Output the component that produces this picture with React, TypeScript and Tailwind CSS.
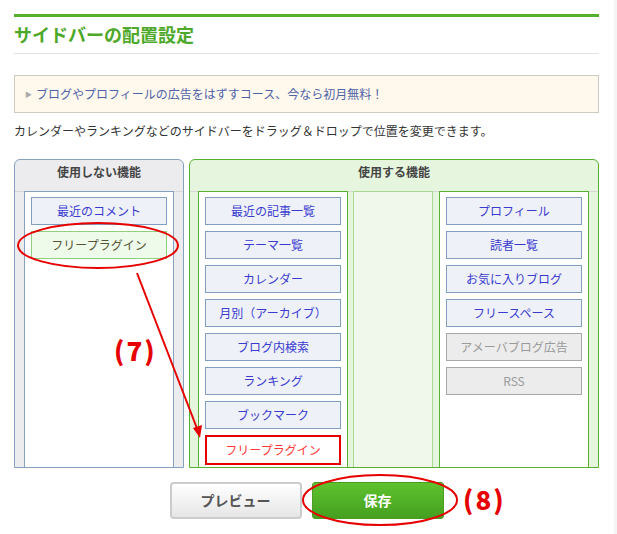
import React from 'react';

type Variant = 'blue' | 'green' | 'red' | 'gray';

const itemStyles: Record<Variant, string> = {
  blue: 'h-[28px] border border-[#819dbf] bg-[#eef2f8] text-[#3a3ad0]',
  green: 'h-[28px] border border-[#92cf7c] bg-[#eefaea] text-[#555533]',
  red: 'h-[30px] border-2 border-[#e60000] bg-white text-[#ff3a3a]',
  gray: 'h-[28px] border border-[#a8a8a8] bg-[#ececec] text-[#9a9a9a]',
};

const Item = ({ label, variant = 'blue' }: { label: string; variant?: Variant }) => (
  <div className={`flex items-center justify-center text-[12px] leading-none ${itemStyles[variant]}`}>
    {label}
  </div>
);

const usedLeft = ['最近の記事一覧', 'テーマ一覧', 'カレンダー', '月別（アーカイブ）', 'ブログ内検索', 'ランキング', 'ブックマーク'];
const usedRight = ['プロフィール', '読者一覧', 'お気に入りブログ', 'フリースペース'];

export default function App() {
  return (
    <div className="relative flex min-h-[534px] w-[617px] bg-white font-['Noto_Sans_CJK_JP',sans-serif] text-[#333]">
      <div className="w-[614px] pl-[14px] pr-[15px] pt-[14px]">
        {/* 見出し */}
        <div className="h-[3px] bg-[#55b030]" />
        <h2 className="mt-[5px] border-b border-[#e2e2e2] pb-[7px] text-[18px] font-bold leading-[24px] text-[#4ea829]">
          サイドバーの配置設定
        </h2>

        <div className="mt-[21px] flex h-[38px] items-center gap-[4px] border border-[#cfcac2] bg-[#fff8ec] pl-[10px] text-[12px] text-[#4f63a8]">
          <span className="text-[7px] text-[#aaa]">▶</span>
          <span>ブログやプロフィールの広告をはずすコース、今なら初月無料！</span>
        </div>

        <p className="mt-[9px] text-[12px] leading-[18px] text-[#333]">
          カレンダーやランキングなどのサイドバーをドラッグ＆ドロップで位置を変更できます。
        </p>

        {/* パネル */}
        <div className="mt-[19px] flex h-[309px] gap-[5px]">
          <div className="flex w-[170px] flex-col rounded-t-[6px] border border-[#86a0bf] bg-[#ececee]">
            <div className="h-[32px] shrink-0 border-b border-[#d6d6d6] pt-[3px] text-center text-[12px] font-bold leading-[18px] text-[#444]">
              使用しない機能
            </div>
            <div className="flex flex-1 px-[9px]">
              <div className="-mt-px flex w-[150px] flex-col gap-[6px] border-x border-t border-[#86a0bf] bg-white px-[6px] pt-[5px]">
                <Item label="最近のコメント" />
                <Item label="フリープラグイン" variant="green" />
              </div>
            </div>
          </div>

          <div className="flex w-[410px] flex-col rounded-t-[6px] border border-[#58b030] bg-[#e6f5de]">
            <div className="h-[32px] shrink-0 border-b border-[#d6d6d6] pt-[3px] text-center text-[12px] font-bold leading-[18px] text-[#444]">
              使用する機能
            </div>
            <div className="flex flex-1 pl-[8px]">
              <div className="-mt-px flex w-[150px] flex-col gap-[6px] border-x border-t border-[#58b030] bg-white px-[6px] pt-[5px]">
                {usedLeft.map((l) => (
                  <Item key={l} label={l} />
                ))}
                <Item label="フリープラグイン" variant="red" />
              </div>
              <div className="-mt-px ml-[5px] w-[80px] border-x border-t border-[#a9d892] bg-[#f0f8eb]" />
              <div className="-mt-px ml-[6px] flex w-[150px] flex-col gap-[6px] border-x border-t border-[#58b030] bg-white px-[6px] pt-[5px]">
                {usedRight.map((l) => (
                  <Item key={l} label={l} />
                ))}
                <Item label="アメーバブログ広告" variant="gray" />
                <Item label="RSS" variant="gray" />
              </div>
            </div>
          </div>
        </div>

        {/* ボタン */}
        <div className="mt-[14px] flex justify-center gap-[10px]">
          <button className="h-[37px] w-[132px] rounded-[4px] border-2 border-[#cccccc] bg-gradient-to-b from-white to-[#e6e6e6] text-[14px] font-bold text-[#555]">
            プレビュー
          </button>
          <button className="h-[37px] w-[132px] rounded-[3px] border border-[#4b9d24] bg-gradient-to-b from-[#5ec22e] to-[#45a020] text-[14px] font-bold text-white">
            保存
          </button>
        </div>
      </div>
      <div className="flex-1 bg-[#f5f5f5]" />

      {/* 注釈 */}
      <svg className="pointer-events-none absolute left-0 top-0" width="617" height="534" viewBox="0 0 617 534">
        <ellipse cx="98" cy="245.5" rx="80" ry="22.5" fill="none" stroke="#e60000" strokeWidth="2" />
        <line x1="137" y1="273" x2="198" y2="431" stroke="#e60000" strokeWidth="2" />
        <polygon points="200,438 193,428 202,425" fill="#e60000" />
        <ellipse cx="380" cy="500" rx="77" ry="25" fill="none" stroke="#e60000" strokeWidth="2" />
      </svg>
      <div className="pointer-events-none absolute left-[114px] top-[333px] text-[26px] font-black leading-[34px] tracking-[2px] text-[#e60000]">
        (7)
      </div>
      <div className="pointer-events-none absolute left-[463px] top-[482px] text-[26px] font-black leading-[34px] tracking-[2px] text-[#e60000]">
        (8)
      </div>
    </div>
  );
}
